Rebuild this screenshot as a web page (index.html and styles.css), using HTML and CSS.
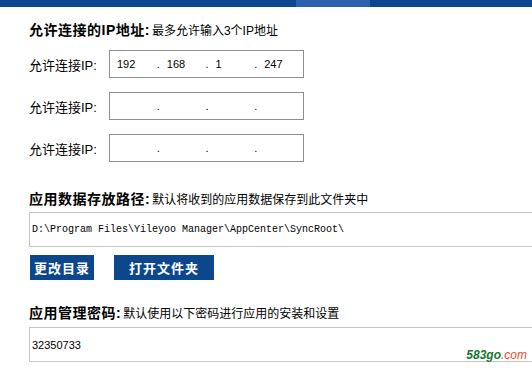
FILE: index.html
```html
<!DOCTYPE html>
<html lang="zh-CN">
<head>
    <meta charset="UTF-8">
    <title>应用设置</title>
    <link rel="stylesheet" href="styles.css">
</head>
<body>
    <div class="topbar"><div class="tab"></div></div>

    <div class="main">
        <div class="title first"><b>允许连接的IP地址:</b>最多允许输入3个IP地址</div>

        <div class="ip-row">
            <span class="label">允许连接IP:</span>
            <div class="ip-box">
                <span class="ip-first">192</span>
                <span class="ip-part"><span class="dot">.</span>168</span>
                <span class="ip-part"><span class="dot">.</span>1</span>
                <span class="ip-part"><span class="dot">.</span>247</span>
            </div>
        </div>
        <div class="ip-row">
            <span class="label">允许连接IP:</span>
            <div class="ip-box">
                <span class="ip-first"></span>
                <span class="ip-part"><span class="dot">.</span></span>
                <span class="ip-part"><span class="dot">.</span></span>
                <span class="ip-part"><span class="dot">.</span></span>
            </div>
        </div>
        <div class="ip-row">
            <span class="label">允许连接IP:</span>
            <div class="ip-box">
                <span class="ip-first"></span>
                <span class="ip-part"><span class="dot">.</span></span>
                <span class="ip-part"><span class="dot">.</span></span>
                <span class="ip-part"><span class="dot">.</span></span>
            </div>
        </div>

        <div class="title path-title"><b>应用数据存放路径:</b>默认将收到的应用数据保存到此文件夹中</div>
        <div class="field mono">D:\Program Files\Yileyoo Manager\AppCenter\SyncRoot\</div>
        <div class="buttons">
            <button class="btn btn-small">更改目录</button>
            <button class="btn btn-wide">打开文件夹</button>
        </div>

        <div class="title pwd-title"><b>应用管理密码:</b>默认使用以下密码进行应用的安装和设置</div>
        <div class="field">32350733</div>
    </div>

    <div class="watermark"><span class="wm-green">583go</span><span class="wm-red">.com</span></div>
</body>
</html>
```

FILE: styles.css
```css
html, body {
    margin: 0;
    overflow: hidden;
}
body {
    background: #fff;
    color: #000;
    font-family: "Liberation Sans", "Noto Sans CJK SC", sans-serif;
    font-size: 12px;
    width: 532px;
    height: 373px;
    position: relative;
}
.topbar {
    height: 7px;
    background: #0c478d;
    display: flex;
}
.tab {
    margin-left: 296px;
    width: 74px;
    background: #2c60b0;
}
.main {
    padding-left: 29px;
}
.title {
    height: 16px;
    line-height: 16px;
    font-size: 12px;
    white-space: nowrap;
}
.title b {
    font-size: 14px;
    font-weight: bold;
    letter-spacing: 0.5px;
    padding-right: 2px;
}
.title.first {
    margin-top: 15px;
    margin-bottom: 12px;
}
.ip-row {
    display: flex;
    align-items: center;
    height: 28px;
    margin-bottom: 14px;
}
.label {
    width: 80px;
    font-size: 13px;
}
.ip-box {
    box-sizing: border-box;
    width: 195px;
    height: 28px;
    border: 1px solid #8e8e8e;
    display: flex;
    align-items: center;
    font-size: 11px;
}
.ip-first {
    width: 40px;
    padding-left: 7px;
}
.ip-part {
    width: 49px;
}
.dot {
    display: inline-block;
    width: 10px;
}
.path-title {
    margin-top: 29px;
    margin-bottom: 5px;
}
.field {
    box-sizing: border-box;
    width: 520px;
    height: 35px;
    border: 1px solid #c4c4c4;
    display: flex;
    align-items: center;
    padding-left: 2px;
    font-size: 11px;
}
.mono {
    font-family: "Liberation Mono", monospace;
    font-size: 10px;
}
.buttons {
    display: flex;
    gap: 20px;
    margin-top: 8px;
    padding-left: 1px;
}
.btn {
    height: 25px;
    border: none;
    background: #0c478d;
    color: #fff;
    font-family: "Noto Sans CJK SC", sans-serif;
    font-weight: bold;
    font-size: 13px;
    letter-spacing: 1px;
    padding: 0;
}
.btn-small {
    width: 64px;
}
.btn-wide {
    width: 100px;
}
.pwd-title {
    margin-top: 25px;
    margin-bottom: 6px;
}
.watermark {
    position: absolute;
    right: 5px;
    bottom: 11px;
    font-family: "Liberation Sans", sans-serif;
    font-style: italic;
    font-weight: bold;
    font-size: 12px;
}
.wm-green {
    color: #15782c;
}
.wm-red {
    color: #ee4b22;
    font-weight: normal;
}
```
